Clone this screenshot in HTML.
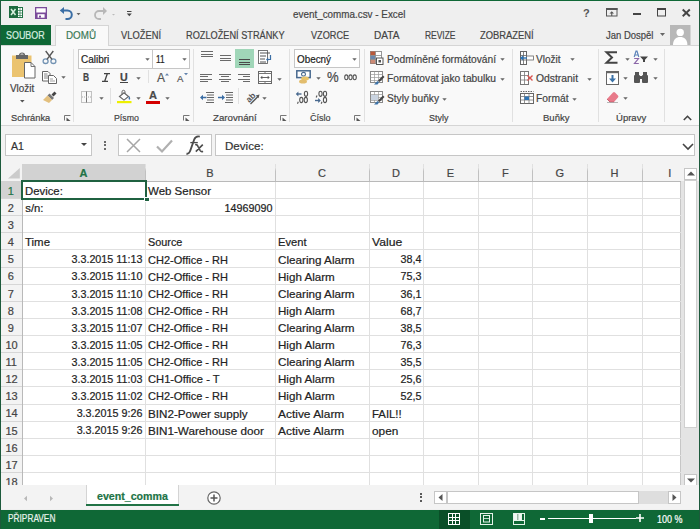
<!DOCTYPE html>
<html><head><meta charset="utf-8"><style>
html,body{margin:0;padding:0;width:700px;height:529px;overflow:hidden;}
body{position:relative;font-family:"Liberation Sans",sans-serif;}
.a{position:absolute;}
.t{position:absolute;white-space:nowrap;line-height:1;transform-origin:0 0;-webkit-text-stroke:0.2px currentColor;}
svg.a{overflow:visible;}
</style></head><body>
<div class="a" style="left:0px;top:0px;width:700px;height:529px;background:#efefef;"></div>
<div class="a" style="left:1px;top:45px;width:698px;height:80px;background:#f9f9f9;"></div>
<div class="a" style="left:1px;top:45px;width:698px;height:1px;background:#d5d5d5;"></div>
<div class="a" style="left:1px;top:125px;width:698px;height:1px;background:#d5d5d5;"></div>
<div class="a" style="left:1px;top:126px;width:698px;height:38px;background:#f3f3f3;"></div>
<svg class="a" style="left:9px;top:6px;" width="15" height="13" viewBox="0 0 15 13"><rect x="8.5" y="1.5" width="5" height="10" fill="#fff" stroke="#217346" stroke-width="1"/><path d="M11 2v9M9 4.5h4M9 7h4M9 9.5h4" stroke="#217346" stroke-width="0.7"/><rect x="0" y="0" width="9" height="12" fill="#1d6b3f"/><path d="M2 3l4.5 6M6.5 3L2 9" stroke="#d9efe0" stroke-width="1.5"/></svg>
<svg class="a" style="left:35px;top:7px;" width="12" height="12" viewBox="0 0 12 12"><rect x="0.65" y="0.65" width="10.7" height="10.7" fill="#fff" stroke="#7a4b9a" stroke-width="1.3"/><rect x="0" y="5.5" width="12" height="1.7" fill="#7a4b9a"/><rect x="0" y="7" width="2.6" height="5" fill="#7a4b9a"/><rect x="9.6" y="7" width="2.4" height="5" fill="#7a4b9a"/><rect x="4" y="8.6" width="2" height="2" fill="#7a4b9a"/></svg>
<svg class="a" style="left:59px;top:5px;" width="24" height="16" viewBox="0 0 24 16"><path d="M3.5 5.5h5a4.3 4.3 0 0 1 0 8.6h-2" fill="none" stroke="#3a6ea5" stroke-width="2"/><path d="M0.8 5.5l4.2-3.6v7.2z" fill="#3a6ea5"/><path d="M17.5 8h4l-2 2.2z" fill="#666"/></svg>
<svg class="a" style="left:93px;top:5px;" width="24" height="16" viewBox="0 0 24 16"><path d="M12 6h-6a4 4 0 0 0 0 8h2" fill="none" stroke="#b8b8b8" stroke-width="1.8"/><path d="M14 6l-4-4v8z" fill="#b8b8b8"/><path d="M19 9h3l-1.5 1.5z" fill="#bbb"/></svg>
<svg class="a" style="left:126px;top:8px;" width="8" height="10" viewBox="0 0 8 10"><rect x="1" y="3" width="4.5" height="1" fill="#444"/><path d="M0.8 5.5h5l-2.5 2.8z" fill="#444"/></svg>
<div class="t" style="left:293.00px;top:8.50px;font-size:10.76px;color:#444;transform:scaleX(0.918)">event_comma.csv - Excel</div>
<svg class="a" style="left:582px;top:7px;" width="10" height="12" viewBox="0 0 10 12"><text x="1" y="10" font-family="Liberation Sans" font-weight="bold" font-size="11" fill="#555">?</text></svg>
<svg class="a" style="left:606px;top:8px;" width="12" height="9" viewBox="0 0 12 9"><rect x="0.5" y="0.5" width="10.5" height="7.5" fill="none" stroke="#555"/><rect x="0" y="0" width="11.5" height="2" fill="#555"/><path d="M5.75 8v-3.5" stroke="#555" stroke-width="1.1"/><path d="M3.5 5.5l2.25-2.2 2.25 2.2z" fill="#555"/></svg>
<div class="a" style="left:632.5px;top:13px;width:8px;height:2px;background:#444;"></div>
<svg class="a" style="left:657px;top:8px;" width="9" height="8.5" viewBox="0 0 9 8.5"><rect x="0.5" y="0.5" width="8" height="7.5" fill="none" stroke="#444"/><rect x="0" y="0" width="9" height="2" fill="#444"/></svg>
<svg class="a" style="left:682px;top:8.8px;" width="8.5" height="7.8" viewBox="0 0 8.5 7.8"><path d="M0.7 0.5l7.1 6.8M7.8 0.5L0.7 7.3" stroke="#444" stroke-width="1.9"/></svg>
<div class="a" style="left:0px;top:25px;width:51px;height:20px;background:#0f6836;"></div>
<div class="t" style="left:6.30px;top:29.67px;font-size:10.90px;color:#d8efe0;transform:scaleX(0.819)">SOUBOR</div>
<div class="a" style="left:55px;top:25px;width:54px;height:21px;background:#f9f9f9;box-sizing:border-box;border:1px solid #d5d5d5;border-bottom:none;"></div>
<div class="t" style="left:65.70px;top:29.67px;font-size:10.90px;color:#3a7a56;transform:scaleX(0.901)">DOMŮ</div>
<div class="t" style="left:121.40px;top:29.67px;font-size:10.90px;color:#444;transform:scaleX(0.858)">VLOŽENÍ</div>
<div class="t" style="left:186.30px;top:29.67px;font-size:10.90px;color:#444;transform:scaleX(0.844)">ROZLOŽENÍ STRÁNKY</div>
<div class="t" style="left:311.30px;top:29.67px;font-size:10.90px;color:#444;transform:scaleX(0.841)">VZORCE</div>
<div class="t" style="left:373.80px;top:29.67px;font-size:10.90px;color:#444;transform:scaleX(0.929)">DATA</div>
<div class="t" style="left:424.50px;top:29.67px;font-size:10.90px;color:#444;transform:scaleX(0.775)">REVIZE</div>
<div class="t" style="left:480.00px;top:29.67px;font-size:10.90px;color:#444;transform:scaleX(0.861)">ZOBRAZENÍ</div>
<div class="t" style="left:606.30px;top:29.67px;font-size:10.90px;color:#444;transform:scaleX(0.871)">Jan Dospěl</div>
<svg class="a" style="left:660px;top:33px;" width="6" height="4" viewBox="0 0 6 4"><path d="M0 0h5l-2.5 3z" fill="#666"/></svg>
<svg class="a" style="left:670px;top:25px;" width="20.5" height="20" viewBox="0 0 20.5 20"><rect width="20.5" height="20" fill="#b8b8b8"/><circle cx="10.2" cy="7.4" r="3.7" fill="#fff"/><path d="M3 20c0-5.5 3.2-8 7.2-8s7.2 2.5 7.2 8z" fill="#fff"/></svg>
<div class="a" style="left:73px;top:49px;width:1px;height:73px;background:#e1e1e1;"></div>
<div class="a" style="left:193px;top:49px;width:1px;height:73px;background:#e1e1e1;"></div>
<div class="a" style="left:289px;top:49px;width:1px;height:73px;background:#e1e1e1;"></div>
<div class="a" style="left:364px;top:49px;width:1px;height:73px;background:#e1e1e1;"></div>
<div class="a" style="left:512px;top:49px;width:1px;height:73px;background:#e1e1e1;"></div>
<div class="a" style="left:598px;top:49px;width:1px;height:73px;background:#e1e1e1;"></div>
<div class="a" style="left:664px;top:49px;width:1px;height:73px;background:#e1e1e1;"></div>
<div class="t" style="left:10.70px;top:113.26px;font-size:9.74px;color:#444;transform:scaleX(0.955)">Schránka</div>
<svg class="a" style="left:64px;top:115px;" width="7" height="6" viewBox="0 0 7 6"><path d="M0.5 5.5V0.5h6" fill="none" stroke="#777" stroke-width="1"/><path d="M2.5 2.5l4 3.5h-4z" fill="#555"/></svg>
<div class="t" style="left:114.00px;top:113.26px;font-size:9.74px;color:#444;transform:scaleX(0.902)">Písmo</div>
<svg class="a" style="left:183px;top:115px;" width="7" height="6" viewBox="0 0 7 6"><path d="M0.5 5.5V0.5h6" fill="none" stroke="#777" stroke-width="1"/><path d="M2.5 2.5l4 3.5h-4z" fill="#555"/></svg>
<div class="t" style="left:212.60px;top:113.26px;font-size:9.74px;color:#444;transform:scaleX(0.997)">Zarovnání</div>
<svg class="a" style="left:280px;top:115px;" width="7" height="6" viewBox="0 0 7 6"><path d="M0.5 5.5V0.5h6" fill="none" stroke="#777" stroke-width="1"/><path d="M2.5 2.5l4 3.5h-4z" fill="#555"/></svg>
<div class="t" style="left:309.60px;top:113.26px;font-size:9.74px;color:#444;transform:scaleX(0.929)">Číslo</div>
<svg class="a" style="left:354px;top:115px;" width="7" height="6" viewBox="0 0 7 6"><path d="M0.5 5.5V0.5h6" fill="none" stroke="#777" stroke-width="1"/><path d="M2.5 2.5l4 3.5h-4z" fill="#555"/></svg>
<div class="t" style="left:428.60px;top:113.26px;font-size:9.74px;color:#444;transform:scaleX(0.919)">Styly</div>
<div class="t" style="left:542.80px;top:113.26px;font-size:9.74px;color:#444;transform:scaleX(0.979)">Buňky</div>
<div class="t" style="left:616.40px;top:113.26px;font-size:9.74px;color:#444;transform:scaleX(0.979)">Úpravy</div>
<svg class="a" style="left:683px;top:115px;" width="9" height="6" viewBox="0 0 9 6"><path d="M0.8 5L4.5 1.3 8.2 5" fill="none" stroke="#444" stroke-width="1.6"/></svg>
<svg class="a" style="left:11px;top:52px;" width="26" height="28" viewBox="0 0 26 28"><rect x="1" y="3.5" width="19.5" height="21.5" fill="#ebc36f"/><rect x="5" y="3" width="12" height="4" fill="#666"/><path d="M8.5 3.2a2.5 2.2 0 0 1 5 0z" fill="none" stroke="#666" stroke-width="1.2"/><path d="M13.5 10.5h6.5l4 4v11.5h-10.5z" fill="#fff" stroke="#666" stroke-width="1"/><path d="M20 10.5v4h4" fill="none" stroke="#666" stroke-width="0.9"/></svg>
<div class="t" style="left:9.80px;top:83.74px;font-size:10.47px;color:#444;transform:scaleX(0.946)">Vložit</div>
<svg class="a" style="left:19.5px;top:100px;" width="5" height="3" viewBox="0 0 5 3"><path d="M0 0h4.6l-2.3 2.6z" fill="#555"/></svg>
<svg class="a" style="left:42px;top:50px;" width="15" height="15" viewBox="0 0 15 15"><ellipse cx="3.6" cy="11.2" rx="2.5" ry="2.3" fill="none" stroke="#7393b3" stroke-width="1.3"/><ellipse cx="11.4" cy="11.2" rx="2.5" ry="2.3" fill="none" stroke="#7393b3" stroke-width="1.3"/><path d="M5 9.3L11.3 1M10 9.3L3.7 1" stroke="#555" stroke-width="1.4"/></svg>
<svg class="a" style="left:42px;top:71px;" width="15" height="13" viewBox="0 0 15 13"><path d="M0.5 0.5h5.5l2 2v7.5h-7.5z" fill="#fff" stroke="#666"/><path d="M2 3h3.5M2 5h4.5M2 7h4.5" stroke="#777" stroke-width="0.9"/><path d="M6.5 4.5h5l3 3v5h-8z" fill="#fff" stroke="#666"/><path d="M8 8h3M8 10h5" stroke="#888" stroke-width="0.8"/></svg>
<svg class="a" style="left:61px;top:76px;" width="5" height="3" viewBox="0 0 5 3"><path d="M0.3 0.2h4.4l-2.2 2.6z" fill="#666"/></svg>
<svg class="a" style="left:43px;top:91px;" width="14" height="12" viewBox="0 0 14 12"><path d="M8.5 3.5l3-3 2 2-3 3z" fill="#444"/><path d="M6.5 2.5l4.5 4.5-2 2-4.5-4.5z" fill="#777"/><path d="M4.5 4.5l4.5 4.5-3 3-6-3z" fill="#e3c07e"/></svg>
<div class="a" style="left:78px;top:49px;width:75px;height:20px;background:#fff;box-sizing:border-box;border:1px solid #c6c6c6;"></div>
<div class="a" style="left:152px;top:49px;width:38px;height:20px;background:#fff;box-sizing:border-box;border:1px solid #c6c6c6;"></div>
<div class="t" style="left:80.60px;top:53.62px;font-size:10.61px;color:#222;transform:scaleX(0.941)">Calibri</div>
<svg class="a" style="left:145px;top:58px;" width="5" height="3" viewBox="0 0 5 3"><path d="M0.3 0.2h4.4l-2.2 2.6z" fill="#666"/></svg>
<div class="t" style="left:156.00px;top:53.62px;font-size:10.61px;color:#222;transform:scaleX(0.781)">11</div>
<svg class="a" style="left:182px;top:58px;" width="5" height="3" viewBox="0 0 5 3"><path d="M0.3 0.2h4.4l-2.2 2.6z" fill="#666"/></svg>
<div class="t" style="left:83.10px;top:71.77px;font-size:10.90px;color:#444;font-weight:bold;transform:scaleX(0.775)">B</div>
<svg class="a" style="left:102px;top:73px;" width="8" height="9" viewBox="0 0 8 9"><path d="M2 0.7h6M0 8.3h6M5.3 0.7L2.7 8.3" fill="none" stroke="#444" stroke-width="1.3"/></svg>
<div class="t" style="left:120.00px;top:71.77px;font-size:10.90px;color:#444;font-weight:bold;transform:scaleX(0.978)">U</div>
<div class="a" style="left:120px;top:82px;width:8px;height:1px;background:#444;"></div>
<svg class="a" style="left:136px;top:77px;" width="5" height="3" viewBox="0 0 5 3"><path d="M0.3 0.2h4.4l-2.2 2.6z" fill="#666"/></svg>
<div class="a" style="left:148px;top:70px;width:1px;height:13px;background:#e1e1e1;"></div>
<div class="t" style="left:157.00px;top:72.26px;font-size:12.21px;color:#555;transform:scaleX(0.982)">A</div>
<svg class="a" style="left:164.5px;top:72.5px;" width="4" height="3" viewBox="0 0 4 3"><path d="M0 2.5l2-2.3 2 2.3z" fill="#6283ad"/></svg>
<div class="t" style="left:176.60px;top:74.23px;font-size:9.88px;color:#555;transform:scaleX(0.971)">A</div>
<svg class="a" style="left:184px;top:72.5px;" width="4" height="3" viewBox="0 0 4 3"><path d="M0 0h4l-2 2.3z" fill="#6283ad"/></svg>
<svg class="a" style="left:81px;top:91px;" width="11" height="12" viewBox="0 0 11 12"><rect x="0.5" y="0.5" width="10" height="11" fill="none" stroke="#8a8a8a" stroke-dasharray="1 1"/><path d="M5.5 0.5v11" stroke="#777"/><path d="M1 6h9" stroke="#aaa" stroke-dasharray="1 1"/></svg>
<svg class="a" style="left:99px;top:97px;" width="5" height="3" viewBox="0 0 5 3"><path d="M0.3 0.2h4.4l-2.2 2.6z" fill="#666"/></svg>
<div class="a" style="left:110px;top:88px;width:1px;height:16px;background:#e1e1e1;"></div>
<svg class="a" style="left:116.5px;top:90px;" width="15" height="14" viewBox="0 0 15 14"><path d="M2.5 6.5l4.5-3.8 4.5 3.8-4.5 3.6z" fill="#fff" stroke="#666" stroke-width="1.2"/><path d="M5 4.5V1.8a1.5 1.5 0 0 1 3 0v2" fill="none" stroke="#666" stroke-width="1"/><path d="M12 6c1.2 1.6 1.6 2.8 0.8 3.6-0.8 0.6-1.8-0.4-0.8-3.6z" fill="#3b6ea5"/><rect x="0" y="11" width="14.5" height="2.2" fill="#eef000"/></svg>
<svg class="a" style="left:136px;top:97px;" width="5" height="3" viewBox="0 0 5 3"><path d="M0.3 0.2h4.4l-2.2 2.6z" fill="#666"/></svg>
<div class="t" style="left:149.20px;top:90.45px;font-size:11.05px;color:#4a4a4a;font-weight:bold;transform:scaleX(1.003)">A</div>
<div class="a" style="left:146px;top:101px;width:13.5px;height:3px;background:#d40000;"></div>
<svg class="a" style="left:165px;top:97px;" width="5" height="3" viewBox="0 0 5 3"><path d="M0.3 0.2h4.4l-2.2 2.6z" fill="#666"/></svg>
<div class="a" style="left:235px;top:48.5px;width:18.5px;height:19.5px;background:#a0d6b8;"></div>
<div class="a" style="left:201px;top:51px;width:11.5px;height:1px;background:#6a6a6a;"></div>
<div class="a" style="left:201px;top:53.5px;width:11.5px;height:1px;background:#6a6a6a;"></div>
<div class="a" style="left:201px;top:56px;width:11.5px;height:1px;background:#6a6a6a;"></div>
<div class="a" style="left:219.5px;top:55px;width:11.5px;height:1px;background:#6a6a6a;"></div>
<div class="a" style="left:219.5px;top:57.5px;width:11.5px;height:1px;background:#6a6a6a;"></div>
<div class="a" style="left:219.5px;top:60px;width:11.5px;height:1px;background:#6a6a6a;"></div>
<div class="a" style="left:238.5px;top:59px;width:11.5px;height:1px;background:#4a4a4a;"></div>
<div class="a" style="left:238.5px;top:61.5px;width:11.5px;height:1px;background:#4a4a4a;"></div>
<div class="a" style="left:238.5px;top:64px;width:11.5px;height:1px;background:#4a4a4a;"></div>
<svg class="a" style="left:258px;top:50px;" width="15" height="14" viewBox="0 0 15 14"><rect x="0.5" y="0.5" width="9" height="13" fill="#fff" stroke="#666" stroke-width="0.9"/><path d="M2 3h10M2 6h6M2 9h5M2 12h6" stroke="#555" stroke-width="1"/><path d="M12.5 5v4.5h-3.5" fill="none" stroke="#3b6ea5" stroke-width="1.2"/><path d="M8 9.5l2.2-2v4z" fill="#3b6ea5"/></svg>
<div class="a" style="left:200px;top:73.5px;width:12px;height:1px;background:#6a6a6a;"></div>
<div class="a" style="left:219.0px;top:73.5px;width:12px;height:1px;background:#6a6a6a;"></div>
<div class="a" style="left:238px;top:73.5px;width:12px;height:1px;background:#6a6a6a;"></div>
<div class="a" style="left:200px;top:76px;width:7.5px;height:1px;background:#6a6a6a;"></div>
<div class="a" style="left:221.25px;top:76px;width:7.5px;height:1px;background:#6a6a6a;"></div>
<div class="a" style="left:242.5px;top:76px;width:7.5px;height:1px;background:#6a6a6a;"></div>
<div class="a" style="left:200px;top:78.5px;width:12px;height:1px;background:#6a6a6a;"></div>
<div class="a" style="left:219.0px;top:78.5px;width:12px;height:1px;background:#6a6a6a;"></div>
<div class="a" style="left:238px;top:78.5px;width:12px;height:1px;background:#6a6a6a;"></div>
<div class="a" style="left:200px;top:81px;width:7.5px;height:1px;background:#6a6a6a;"></div>
<div class="a" style="left:221.25px;top:81px;width:7.5px;height:1px;background:#6a6a6a;"></div>
<div class="a" style="left:242.5px;top:81px;width:7.5px;height:1px;background:#6a6a6a;"></div>
<svg class="a" style="left:258px;top:71px;" width="14" height="13" viewBox="0 0 14 13"><rect x="0.5" y="0.5" width="13" height="12" fill="#fff" stroke="#666"/><path d="M0.5 2.5h13M0.5 10.5h13" stroke="#777"/><path d="M7 0.5v2M7 10.5v2" stroke="#777"/><path d="M3 6.5h8" stroke="#555" stroke-width="0.9"/><path d="M2.3 6.5l2-1.7v3.4zM11.7 6.5l-2-1.7v3.4z" fill="#555"/></svg>
<svg class="a" style="left:277px;top:78px;" width="5" height="3" viewBox="0 0 5 3"><path d="M0.3 0.2h4.4l-2.2 2.6z" fill="#666"/></svg>
<svg class="a" style="left:200px;top:92px;" width="14" height="11" viewBox="0 0 14 11"><path d="M6 0.5h8M7 3h7M7 5.5h7M7 8h7M6 10.5h8" stroke="#666" stroke-width="1"/><path d="M1.5 5.5h5" stroke="#3b6ea5" stroke-width="1.5"/><path d="M0 5.5l3-2.8v5.6z" fill="#3b6ea5"/></svg>
<svg class="a" style="left:218px;top:92px;" width="15" height="11" viewBox="0 0 15 11"><path d="M7 0.5h8M8 3h7M8 5.5h7M8 8h7M7 10.5h8" stroke="#666" stroke-width="1"/><path d="M0 5.5h5" stroke="#3b6ea5" stroke-width="1.5"/><path d="M7 5.5l-3-2.8v5.6z" fill="#3b6ea5"/></svg>
<div class="a" style="left:238px;top:88px;width:1px;height:16px;background:#e1e1e1;"></div>
<svg class="a" style="left:245px;top:90px;" width="16" height="15" viewBox="0 0 16 15"><g transform="rotate(-45 6 7)"><text x="0.5" y="10" font-family="Liberation Sans" font-size="8.5" font-weight="bold" fill="#555">ab</text></g><path d="M5.5 14l7.5-7.5" stroke="#555" stroke-width="1.3"/><path d="M14.5 4.5l-1 3.8-2.8-2.8z" fill="#555"/></svg>
<svg class="a" style="left:262px;top:97px;" width="5" height="3" viewBox="0 0 5 3"><path d="M0.3 0.2h4.4l-2.2 2.6z" fill="#666"/></svg>
<div class="a" style="left:294px;top:49px;width:66px;height:19px;background:#fff;box-sizing:border-box;border:1px solid #c6c6c6;"></div>
<div class="t" style="left:297.00px;top:53.60px;font-size:10.76px;color:#222;transform:scaleX(0.917)">Obecný</div>
<svg class="a" style="left:352px;top:58px;" width="5" height="3" viewBox="0 0 5 3"><path d="M0.3 0.2h4.4l-2.2 2.6z" fill="#666"/></svg>
<svg class="a" style="left:296px;top:70px;" width="16" height="14" viewBox="0 0 16 14"><rect x="0.8" y="0.8" width="13.4" height="6.8" fill="#fff" stroke="#48698f" stroke-width="1.5"/><ellipse cx="7.5" cy="4.2" rx="2" ry="1.8" fill="none" stroke="#48698f" stroke-width="1.1"/><ellipse cx="9" cy="8.5" rx="4" ry="2" fill="#e9c46a"/><ellipse cx="7" cy="11.5" rx="4" ry="2" fill="#e2bd6e"/></svg>
<svg class="a" style="left:316px;top:77px;" width="5" height="3" viewBox="0 0 5 3"><path d="M0.3 0.2h4.4l-2.2 2.6z" fill="#666"/></svg>
<div class="t" style="left:327.00px;top:71.31px;font-size:13.81px;color:#4a4a4a;transform:scaleX(0.950)">%</div>
<svg class="a" style="left:344px;top:74px;" width="14" height="7" viewBox="0 0 14 7"><ellipse cx="2.3" cy="3.3" rx="1.6" ry="2.4" fill="none" stroke="#555" stroke-width="1.1"/><ellipse cx="6.5" cy="3.3" rx="1.6" ry="2.4" fill="none" stroke="#555" stroke-width="1.1"/><ellipse cx="10.7" cy="3.3" rx="1.6" ry="2.4" fill="none" stroke="#555" stroke-width="1.1"/></svg>
<svg class="a" style="left:295px;top:90px;" width="15" height="15" viewBox="0 0 15 15"><path d="M2 4h4.5" stroke="#48698f" stroke-width="1.4"/><path d="M0.8 4l2.6-2.4v4.8z" fill="#48698f"/><ellipse cx="11" cy="3.8" rx="1.6" ry="2.6" fill="none" stroke="#555" stroke-width="1.1"/><path d="M3.3 11.8l-0.8 2" stroke="#555" stroke-width="1.1"/><ellipse cx="6.3" cy="10" rx="1.6" ry="2.6" fill="none" stroke="#555" stroke-width="1.1"/><ellipse cx="10.8" cy="10" rx="1.6" ry="2.6" fill="none" stroke="#555" stroke-width="1.1"/></svg>
<svg class="a" style="left:314px;top:90px;" width="15" height="15" viewBox="0 0 15 15"><path d="M3 5.5l-0.8 2" stroke="#555" stroke-width="1.1"/><ellipse cx="6.5" cy="3.8" rx="1.6" ry="2.6" fill="none" stroke="#555" stroke-width="1.1"/><ellipse cx="11" cy="3.8" rx="1.6" ry="2.6" fill="none" stroke="#555" stroke-width="1.1"/><path d="M1 10.5h4.5" stroke="#48698f" stroke-width="1.4"/><path d="M6.8 10.5l-2.6-2.4v4.8z" fill="#48698f"/><path d="M8 11.8l-0.8 2" stroke="#555" stroke-width="1.1"/><ellipse cx="11" cy="10" rx="1.6" ry="2.6" fill="none" stroke="#555" stroke-width="1.1"/></svg>
<svg class="a" style="left:370px;top:51px;" width="14" height="14" viewBox="0 0 14 14"><rect x="0.5" y="0.5" width="11" height="12" fill="#fff" stroke="#8a8a8a" stroke-width="0.9"/><rect x="0.5" y="0.5" width="5" height="4" fill="#b8583a"/><rect x="0.5" y="4.5" width="5" height="4" fill="#6a86ab"/><rect x="0.5" y="8.5" width="5" height="4" fill="#b8583a" opacity="0.7"/><path d="M5.5 0.5v12M0.5 4.5h11M0.5 8.5h11" stroke="#8a8a8a" stroke-width="0.8"/><rect x="6.5" y="7" width="6.5" height="6.5" fill="#fff" stroke="#555" stroke-width="1"/><rect x="8.5" y="9" width="2.5" height="2.5" fill="#555"/></svg>
<div class="t" style="left:387.00px;top:53.72px;font-size:10.61px;color:#444;transform:scaleX(0.963)">Podmíněné formátování</div>
<svg class="a" style="left:499.5px;top:58px;" width="5" height="3" viewBox="0 0 5 3"><path d="M0.3 0.2h4.4l-2.2 2.6z" fill="#666"/></svg>
<svg class="a" style="left:370px;top:71px;" width="15" height="14" viewBox="0 0 15 14"><rect x="0.5" y="0.5" width="12" height="11" fill="#fff" stroke="#888"/><path d="M4.5 0.5v11M8.5 0.5v11M0.5 3.5h12M0.5 6.5h12M0.5 9.5h12" stroke="#999" stroke-width="0.7"/><path d="M8 9.5l5-5 1.5 1.5-5 5z" fill="#444"/><path d="M4 13.5l3.5-3.5 1.5 1.5-1.5 2z" fill="#3c73a8"/></svg>
<div class="t" style="left:387.00px;top:73.42px;font-size:10.61px;color:#444;transform:scaleX(0.963)">Formátovat jako tabulku</div>
<svg class="a" style="left:499.5px;top:78px;" width="5" height="3" viewBox="0 0 5 3"><path d="M0.3 0.2h4.4l-2.2 2.6z" fill="#666"/></svg>
<svg class="a" style="left:370px;top:91px;" width="15" height="14" viewBox="0 0 15 14"><rect x="0.5" y="0.5" width="12" height="11" fill="#fff" stroke="#888"/><path d="M4.5 0.5v11M8.5 0.5v11M0.5 3.5h12M0.5 6.5h12M0.5 9.5h12" stroke="#999" stroke-width="0.7"/><rect x="1" y="4" width="7" height="5" fill="#c9d3e0"/><path d="M8 9.5l5-5 1.5 1.5-5 5z" fill="#444"/><path d="M4 13.5l3.5-3.5 1.5 1.5-1.5 2z" fill="#3c73a8"/></svg>
<div class="t" style="left:387.00px;top:93.32px;font-size:10.61px;color:#444;transform:scaleX(0.959)">Styly buňky</div>
<svg class="a" style="left:441.5px;top:98px;" width="5" height="3" viewBox="0 0 5 3"><path d="M0.3 0.2h4.4l-2.2 2.6z" fill="#666"/></svg>
<svg class="a" style="left:520px;top:51px;" width="14" height="14" viewBox="0 0 14 14"><rect x="0.5" y="0.5" width="6" height="13" fill="#fff" stroke="#666"/><path d="M0.5 4.5h6M0.5 9h6M3.5 0.5v13" stroke="#666" stroke-width="0.8"/><rect x="6.5" y="5" width="7" height="4" fill="#fff" stroke="#666" stroke-width="0.8"/><path d="M1 7h6" stroke="#2e74b5" stroke-width="1.4"/><path d="M0 7l3-2.5v5z" fill="#2e74b5"/></svg>
<div class="t" style="left:536.00px;top:53.72px;font-size:10.61px;color:#444;transform:scaleX(0.948)">Vložit</div>
<svg class="a" style="left:570px;top:58px;" width="5" height="3" viewBox="0 0 5 3"><path d="M0.3 0.2h4.4l-2.2 2.6z" fill="#666"/></svg>
<svg class="a" style="left:520px;top:71px;" width="14" height="14" viewBox="0 0 14 14"><rect x="0.5" y="0.5" width="8" height="13" fill="#fff" stroke="#777"/><path d="M0.5 4.5h8M0.5 9h8M4.5 0.5v13" stroke="#777" stroke-width="0.8"/><path d="M7.5 4.5l5 5M12.5 4.5l-5 5" stroke="#d9534f" stroke-width="1.4"/></svg>
<div class="t" style="left:536.00px;top:73.42px;font-size:10.61px;color:#444;transform:scaleX(0.976)">Odstranit</div>
<svg class="a" style="left:587px;top:78px;" width="5" height="3" viewBox="0 0 5 3"><path d="M0.3 0.2h4.4l-2.2 2.6z" fill="#666"/></svg>
<svg class="a" style="left:520px;top:91px;" width="14" height="14" viewBox="0 0 14 14"><path d="M0.5 0.5h13" stroke="#666" stroke-dasharray="1.5 1"/><rect x="0.5" y="2.5" width="13" height="10" fill="#fff" stroke="#666"/><path d="M0.5 5.5h13M0.5 9h13M4.5 2.5v10M9 2.5v10" stroke="#777" stroke-width="0.8"/><rect x="4.5" y="5.5" width="4.5" height="3.5" fill="#2e74b5"/></svg>
<div class="t" style="left:536.00px;top:93.32px;font-size:10.61px;color:#444;transform:scaleX(0.967)">Formát</div>
<svg class="a" style="left:572px;top:98px;" width="5" height="3" viewBox="0 0 5 3"><path d="M0.3 0.2h4.4l-2.2 2.6z" fill="#666"/></svg>
<svg class="a" style="left:605px;top:51px;" width="13" height="13" viewBox="0 0 13 13"><path d="M12 1.2H1.5L7 6.5 1.5 11.8H12.5" fill="none" stroke="#444" stroke-width="2"/></svg>
<svg class="a" style="left:624.5px;top:58px;" width="5" height="3" viewBox="0 0 5 3"><path d="M0.3 0.2h4.4l-2.2 2.6z" fill="#666"/></svg>
<svg class="a" style="left:633px;top:50px;" width="16" height="15" viewBox="0 0 16 15"><path d="M1.2 7L3 1h1l1.8 6M2 5h3" fill="none" stroke="#5f86bb" stroke-width="1.2"/><path d="M1.2 8.5h4.3L1.5 13.5h4.3" fill="none" stroke="#8a66a8" stroke-width="1.2"/><path d="M7 6.5h8l-3 3.2V12h-2V9.7z" fill="#444"/></svg>
<svg class="a" style="left:653px;top:58px;" width="5" height="3" viewBox="0 0 5 3"><path d="M0.3 0.2h4.4l-2.2 2.6z" fill="#666"/></svg>
<svg class="a" style="left:606px;top:70.5px;" width="13" height="14" viewBox="0 0 13 14"><rect x="0.5" y="0.5" width="12" height="13" fill="#fff" stroke="#666"/><rect x="0" y="0" width="13" height="2.2" fill="#666"/><path d="M6.5 4v6" stroke="#3c73a8" stroke-width="2"/><path d="M3 7.5h7L6.5 11.5z" fill="#3c73a8"/></svg>
<svg class="a" style="left:623px;top:77px;" width="5" height="3" viewBox="0 0 5 3"><path d="M0.3 0.2h4.4l-2.2 2.6z" fill="#666"/></svg>
<svg class="a" style="left:634px;top:72px;" width="14" height="11" viewBox="0 0 14 11"><rect x="0" y="3" width="6" height="8" rx="1" fill="#555"/><rect x="8" y="3" width="6" height="8" rx="1" fill="#555"/><rect x="1" y="0" width="4" height="4" fill="#555"/><rect x="9" y="0" width="4" height="4" fill="#555"/><rect x="5" y="4" width="4" height="3" fill="#555"/></svg>
<svg class="a" style="left:653px;top:77px;" width="5" height="3" viewBox="0 0 5 3"><path d="M0.3 0.2h4.4l-2.2 2.6z" fill="#666"/></svg>
<svg class="a" style="left:606px;top:91px;" width="13" height="12" viewBox="0 0 13 12"><path d="M1 8l6-6.5a1.5 1.5 0 0 1 2 0l3 3a1.5 1.5 0 0 1 0 2L8 11H4z" fill="#e87a8a"/><path d="M1 8l3 3h4" fill="none" stroke="#c9596a" stroke-width="0.9"/><path d="M1 11.5h11" stroke="#999" stroke-width="0.7"/></svg>
<svg class="a" style="left:623px;top:97px;" width="5" height="3" viewBox="0 0 5 3"><path d="M0.3 0.2h4.4l-2.2 2.6z" fill="#666"/></svg>
<div class="a" style="left:5px;top:134px;width:87px;height:22px;background:#fff;box-sizing:border-box;border:1px solid #c6c6c6;"></div>
<div class="t" style="left:11.40px;top:140.65px;font-size:11.05px;color:#333;transform:scaleX(0.955)">A1</div>
<svg class="a" style="left:81px;top:143px;" width="6" height="4" viewBox="0 0 6 4"><path d="M0 0h6l-3 3z" fill="#444"/></svg>
<div class="a" style="left:104px;top:140.9px;width:2px;height:2px;background:#6a6a6a;"></div>
<div class="a" style="left:104px;top:144.3px;width:2px;height:2px;background:#6a6a6a;"></div>
<div class="a" style="left:104px;top:147.7px;width:2px;height:2px;background:#6a6a6a;"></div>
<div class="a" style="left:118px;top:134px;width:94px;height:22px;background:#fff;box-sizing:border-box;border:1px solid #c6c6c6;"></div>
<svg class="a" style="left:126px;top:138px;" width="15" height="15" viewBox="0 0 15 15"><path d="M1 1l13 13M14 1L1 14" stroke="#a6a6a6" stroke-width="1.5"/></svg>
<svg class="a" style="left:156px;top:139px;" width="17" height="14" viewBox="0 0 17 14"><path d="M1 7.5l5 5L16 1.5" fill="none" stroke="#b0b0b0" stroke-width="2.2"/></svg>
<svg class="a" style="left:180px;top:134px;" width="30" height="24" viewBox="0 0 30 24"><path d="M6.5 19.5Q9 20.5 10.5 16L14.2 5.5Q15.8 1.6 19.8 2.6" fill="none" stroke="#4d4d4d" stroke-width="1.9"/><path d="M10.3 8.6H17.8" stroke="#4d4d4d" stroke-width="1.3"/><path d="M15.2 10.8Q17 10.2 18 12.3L20.2 16.6Q21.3 18.3 23 17.3M22.8 10.6L15.8 17.6" fill="none" stroke="#4d4d4d" stroke-width="1.6"/></svg>
<div class="a" style="left:215px;top:134px;width:480px;height:22px;background:#fff;box-sizing:border-box;border:1px solid #c6c6c6;"></div>
<div class="t" style="left:225.00px;top:140.65px;font-size:11.05px;color:#333;transform:scaleX(1.048)">Device:</div>
<svg class="a" style="left:682px;top:143px;" width="12" height="8" viewBox="0 0 12 8"><path d="M1 1l5 5 5-5" fill="none" stroke="#444" stroke-width="1.6"/></svg>
<div class="a" style="left:1px;top:164px;width:680px;height:17px;background:#f3f3f3;"></div>
<div class="a" style="left:1px;top:181px;width:21px;height:304px;background:#f3f3f3;"></div>
<div class="a" style="left:22px;top:164px;width:123px;height:17px;background:#d2d2d2;"></div>
<div class="a" style="left:22px;top:179.5px;width:123px;height:2px;background:#217346;"></div>
<div class="a" style="left:1px;top:181px;width:21px;height:17px;background:#d2d2d2;"></div>
<div class="a" style="left:20.5px;top:181px;width:1.5px;height:17px;background:#217346;"></div>
<div class="a" style="left:22px;top:181px;width:658.5px;height:304px;background:#fff;"></div>
<div class="a" style="left:145px;top:164px;width:1px;height:321px;background:#e0e0e0;"></div>
<div class="a" style="left:275px;top:164px;width:1px;height:321px;background:#e0e0e0;"></div>
<div class="a" style="left:369px;top:164px;width:1px;height:321px;background:#e0e0e0;"></div>
<div class="a" style="left:423px;top:164px;width:1px;height:321px;background:#e0e0e0;"></div>
<div class="a" style="left:478px;top:164px;width:1px;height:321px;background:#e0e0e0;"></div>
<div class="a" style="left:532px;top:164px;width:1px;height:321px;background:#e0e0e0;"></div>
<div class="a" style="left:587px;top:164px;width:1px;height:321px;background:#e0e0e0;"></div>
<div class="a" style="left:642px;top:164px;width:1px;height:321px;background:#e0e0e0;"></div>
<div class="a" style="left:680px;top:181px;width:1px;height:304px;background:#c6c6c6;"></div>
<div class="a" style="left:22px;top:198px;width:658.5px;height:1px;background:#e0e0e0;"></div>
<div class="a" style="left:22px;top:215px;width:658.5px;height:1px;background:#e0e0e0;"></div>
<div class="a" style="left:22px;top:232px;width:658.5px;height:1px;background:#e0e0e0;"></div>
<div class="a" style="left:22px;top:249px;width:658.5px;height:1px;background:#e0e0e0;"></div>
<div class="a" style="left:22px;top:267px;width:658.5px;height:1px;background:#e0e0e0;"></div>
<div class="a" style="left:22px;top:284px;width:658.5px;height:1px;background:#e0e0e0;"></div>
<div class="a" style="left:22px;top:301px;width:658.5px;height:1px;background:#e0e0e0;"></div>
<div class="a" style="left:22px;top:318px;width:658.5px;height:1px;background:#e0e0e0;"></div>
<div class="a" style="left:22px;top:335px;width:658.5px;height:1px;background:#e0e0e0;"></div>
<div class="a" style="left:22px;top:352px;width:658.5px;height:1px;background:#e0e0e0;"></div>
<div class="a" style="left:22px;top:369px;width:658.5px;height:1px;background:#e0e0e0;"></div>
<div class="a" style="left:22px;top:386px;width:658.5px;height:1px;background:#e0e0e0;"></div>
<div class="a" style="left:22px;top:404px;width:658.5px;height:1px;background:#e0e0e0;"></div>
<div class="a" style="left:22px;top:421px;width:658.5px;height:1px;background:#e0e0e0;"></div>
<div class="a" style="left:22px;top:438px;width:658.5px;height:1px;background:#e0e0e0;"></div>
<div class="a" style="left:22px;top:455px;width:658.5px;height:1px;background:#e0e0e0;"></div>
<div class="a" style="left:22px;top:472px;width:658.5px;height:1px;background:#e0e0e0;"></div>
<div class="a" style="left:145px;top:167px;width:1px;height:14px;background:#c4c4c4;background:linear-gradient(#e8e8e8,#c0c0c0 30%);"></div>
<div class="a" style="left:275px;top:167px;width:1px;height:14px;background:#c4c4c4;background:linear-gradient(#e8e8e8,#c0c0c0 30%);"></div>
<div class="a" style="left:369px;top:167px;width:1px;height:14px;background:#c4c4c4;background:linear-gradient(#e8e8e8,#c0c0c0 30%);"></div>
<div class="a" style="left:423px;top:167px;width:1px;height:14px;background:#c4c4c4;background:linear-gradient(#e8e8e8,#c0c0c0 30%);"></div>
<div class="a" style="left:478px;top:167px;width:1px;height:14px;background:#c4c4c4;background:linear-gradient(#e8e8e8,#c0c0c0 30%);"></div>
<div class="a" style="left:532px;top:167px;width:1px;height:14px;background:#c4c4c4;background:linear-gradient(#e8e8e8,#c0c0c0 30%);"></div>
<div class="a" style="left:587px;top:167px;width:1px;height:14px;background:#c4c4c4;background:linear-gradient(#e8e8e8,#c0c0c0 30%);"></div>
<div class="a" style="left:642px;top:167px;width:1px;height:14px;background:#c4c4c4;background:linear-gradient(#e8e8e8,#c0c0c0 30%);"></div>
<div class="a" style="left:145px;top:181px;width:536px;height:1px;background:#b9b9b9;"></div>
<div class="a" style="left:22px;top:181px;width:1px;height:304px;background:#b9b9b9;"></div>
<div class="a" style="left:1px;top:198px;width:21px;height:1px;background:#d6d6d6;"></div>
<div class="a" style="left:1px;top:215px;width:21px;height:1px;background:#d6d6d6;"></div>
<div class="a" style="left:1px;top:232px;width:21px;height:1px;background:#d6d6d6;"></div>
<div class="a" style="left:1px;top:249px;width:21px;height:1px;background:#d6d6d6;"></div>
<div class="a" style="left:1px;top:267px;width:21px;height:1px;background:#d6d6d6;"></div>
<div class="a" style="left:1px;top:284px;width:21px;height:1px;background:#d6d6d6;"></div>
<div class="a" style="left:1px;top:301px;width:21px;height:1px;background:#d6d6d6;"></div>
<div class="a" style="left:1px;top:318px;width:21px;height:1px;background:#d6d6d6;"></div>
<div class="a" style="left:1px;top:335px;width:21px;height:1px;background:#d6d6d6;"></div>
<div class="a" style="left:1px;top:352px;width:21px;height:1px;background:#d6d6d6;"></div>
<div class="a" style="left:1px;top:369px;width:21px;height:1px;background:#d6d6d6;"></div>
<div class="a" style="left:1px;top:386px;width:21px;height:1px;background:#d6d6d6;"></div>
<div class="a" style="left:1px;top:404px;width:21px;height:1px;background:#d6d6d6;"></div>
<div class="a" style="left:1px;top:421px;width:21px;height:1px;background:#d6d6d6;"></div>
<div class="a" style="left:1px;top:438px;width:21px;height:1px;background:#d6d6d6;"></div>
<div class="a" style="left:1px;top:455px;width:21px;height:1px;background:#d6d6d6;"></div>
<div class="a" style="left:1px;top:472px;width:21px;height:1px;background:#d6d6d6;"></div>
<svg class="a" style="left:7.5px;top:167.5px;" width="12" height="11" viewBox="0 0 12 11"><path d="M11.8 0v10.5H0z" fill="#cbcbcb"/></svg>
<div class="t" style="left:79.53px;top:167.89px;font-size:11.00px;color:#217346;font-weight:bold;transform:scaleX(1.000)">A</div>
<div class="t" style="left:206.33px;top:167.89px;font-size:11.00px;color:#444;transform:scaleX(1.000)">B</div>
<div class="t" style="left:318.03px;top:167.89px;font-size:11.00px;color:#444;transform:scaleX(1.000)">C</div>
<div class="t" style="left:392.03px;top:167.89px;font-size:11.00px;color:#444;transform:scaleX(1.000)">D</div>
<div class="t" style="left:446.83px;top:167.89px;font-size:11.00px;color:#444;transform:scaleX(1.000)">E</div>
<div class="t" style="left:501.89px;top:167.89px;font-size:11.00px;color:#444;transform:scaleX(1.000)">F</div>
<div class="t" style="left:555.47px;top:167.89px;font-size:11.00px;color:#444;transform:scaleX(1.000)">G</div>
<div class="t" style="left:610.53px;top:167.89px;font-size:11.00px;color:#444;transform:scaleX(1.000)">H</div>
<div class="t" style="left:668.27px;top:167.89px;font-size:11.00px;color:#444;transform:scaleX(1.000)">I</div>
<div class="t" style="left:7.74px;top:185.89px;font-size:11.00px;color:#217346;transform:scaleX(1.000)">1</div>
<div class="t" style="left:7.74px;top:203.01px;font-size:11.00px;color:#444;transform:scaleX(1.000)">2</div>
<div class="t" style="left:7.74px;top:220.13px;font-size:11.00px;color:#444;transform:scaleX(1.000)">3</div>
<div class="t" style="left:7.74px;top:237.25px;font-size:11.00px;color:#444;transform:scaleX(1.000)">4</div>
<div class="t" style="left:7.74px;top:254.37px;font-size:11.00px;color:#444;transform:scaleX(1.000)">5</div>
<div class="t" style="left:7.74px;top:271.49px;font-size:11.00px;color:#444;transform:scaleX(1.000)">6</div>
<div class="t" style="left:7.74px;top:288.61px;font-size:11.00px;color:#444;transform:scaleX(1.000)">7</div>
<div class="t" style="left:7.74px;top:305.73px;font-size:11.00px;color:#444;transform:scaleX(1.000)">8</div>
<div class="t" style="left:7.74px;top:322.85px;font-size:11.00px;color:#444;transform:scaleX(1.000)">9</div>
<div class="t" style="left:5.50px;top:339.97px;font-size:11.00px;color:#444;transform:scaleX(1.000)">10</div>
<div class="t" style="left:5.50px;top:357.09px;font-size:11.00px;color:#444;transform:scaleX(1.000)">11</div>
<div class="t" style="left:5.50px;top:374.21px;font-size:11.00px;color:#444;transform:scaleX(1.000)">12</div>
<div class="t" style="left:5.50px;top:391.33px;font-size:11.00px;color:#444;transform:scaleX(1.000)">13</div>
<div class="t" style="left:5.50px;top:408.45px;font-size:11.00px;color:#444;transform:scaleX(1.000)">14</div>
<div class="t" style="left:5.50px;top:425.57px;font-size:11.00px;color:#444;transform:scaleX(1.000)">15</div>
<div class="t" style="left:5.50px;top:442.69px;font-size:11.00px;color:#444;transform:scaleX(1.000)">16</div>
<div class="t" style="left:5.50px;top:459.81px;font-size:11.00px;color:#444;transform:scaleX(1.000)">17</div>
<div class="t" style="left:5.50px;top:476.93px;font-size:11.00px;color:#444;transform:scaleX(1.000)">18</div>
<div class="t" style="left:25.30px;top:186.03px;font-size:11.30px;color:#222;transform:scaleX(1.003)">Device:</div>
<div class="t" style="left:148.20px;top:186.03px;font-size:11.30px;color:#222;transform:scaleX(1.017)">Web Sensor</div>
<div class="t" style="left:25.30px;top:203.15px;font-size:11.30px;color:#222;transform:scaleX(1.000)">s/n:</div>
<div class="t" style="left:224.57px;top:202.92px;font-size:10.75px;color:#222;transform:scaleX(1.000)">14969090</div>
<div class="t" style="left:25.30px;top:237.39px;font-size:11.30px;color:#222;transform:scaleX(1.013)">Time</div>
<div class="t" style="left:148.20px;top:237.39px;font-size:11.30px;color:#222;transform:scaleX(0.961)">Source</div>
<div class="t" style="left:278.00px;top:237.39px;font-size:11.30px;color:#222;transform:scaleX(0.990)">Event</div>
<div class="t" style="left:371.70px;top:237.39px;font-size:11.30px;color:#222;transform:scaleX(1.080)">Value</div>
<div class="t" style="left:71.46px;top:254.28px;font-size:10.75px;color:#222;transform:scaleX(1.000)">3.3.2015 11:13</div>
<div class="t" style="left:148.20px;top:254.51px;font-size:11.30px;color:#222;transform:scaleX(0.975)">CH2-Office - RH</div>
<div class="t" style="left:278.00px;top:254.51px;font-size:11.30px;color:#222;transform:scaleX(1.034)">Clearing Alarm</div>
<div class="t" style="left:400.48px;top:254.28px;font-size:10.75px;color:#222;transform:scaleX(1.000)">38,4</div>
<div class="t" style="left:71.46px;top:271.40px;font-size:10.75px;color:#222;transform:scaleX(1.000)">3.3.2015 11:10</div>
<div class="t" style="left:148.20px;top:271.63px;font-size:11.30px;color:#222;transform:scaleX(0.975)">CH2-Office - RH</div>
<div class="t" style="left:278.00px;top:271.63px;font-size:11.30px;color:#222;transform:scaleX(1.026)">High Alarm</div>
<div class="t" style="left:400.48px;top:271.40px;font-size:10.75px;color:#222;transform:scaleX(1.000)">75,3</div>
<div class="t" style="left:71.46px;top:288.52px;font-size:10.75px;color:#222;transform:scaleX(1.000)">3.3.2015 11:10</div>
<div class="t" style="left:148.20px;top:288.75px;font-size:11.30px;color:#222;transform:scaleX(0.975)">CH2-Office - RH</div>
<div class="t" style="left:278.00px;top:288.75px;font-size:11.30px;color:#222;transform:scaleX(1.034)">Clearing Alarm</div>
<div class="t" style="left:400.48px;top:288.52px;font-size:10.75px;color:#222;transform:scaleX(1.000)">36,1</div>
<div class="t" style="left:71.46px;top:305.64px;font-size:10.75px;color:#222;transform:scaleX(1.000)">3.3.2015 11:08</div>
<div class="t" style="left:148.20px;top:305.87px;font-size:11.30px;color:#222;transform:scaleX(0.975)">CH2-Office - RH</div>
<div class="t" style="left:278.00px;top:305.87px;font-size:11.30px;color:#222;transform:scaleX(1.026)">High Alarm</div>
<div class="t" style="left:400.48px;top:305.64px;font-size:10.75px;color:#222;transform:scaleX(1.000)">68,7</div>
<div class="t" style="left:71.46px;top:322.76px;font-size:10.75px;color:#222;transform:scaleX(1.000)">3.3.2015 11:07</div>
<div class="t" style="left:148.20px;top:322.99px;font-size:11.30px;color:#222;transform:scaleX(0.975)">CH2-Office - RH</div>
<div class="t" style="left:278.00px;top:322.99px;font-size:11.30px;color:#222;transform:scaleX(1.034)">Clearing Alarm</div>
<div class="t" style="left:400.48px;top:322.76px;font-size:10.75px;color:#222;transform:scaleX(1.000)">38,5</div>
<div class="t" style="left:71.46px;top:339.88px;font-size:10.75px;color:#222;transform:scaleX(1.000)">3.3.2015 11:05</div>
<div class="t" style="left:148.20px;top:340.11px;font-size:11.30px;color:#222;transform:scaleX(0.975)">CH2-Office - RH</div>
<div class="t" style="left:278.00px;top:340.11px;font-size:11.30px;color:#222;transform:scaleX(1.026)">High Alarm</div>
<div class="t" style="left:400.48px;top:339.88px;font-size:10.75px;color:#222;transform:scaleX(1.000)">76,3</div>
<div class="t" style="left:71.46px;top:357.00px;font-size:10.75px;color:#222;transform:scaleX(1.000)">3.3.2015 11:05</div>
<div class="t" style="left:148.20px;top:357.23px;font-size:11.30px;color:#222;transform:scaleX(0.975)">CH2-Office - RH</div>
<div class="t" style="left:278.00px;top:357.23px;font-size:11.30px;color:#222;transform:scaleX(1.034)">Clearing Alarm</div>
<div class="t" style="left:400.48px;top:357.00px;font-size:10.75px;color:#222;transform:scaleX(1.000)">35,5</div>
<div class="t" style="left:71.46px;top:374.12px;font-size:10.75px;color:#222;transform:scaleX(1.000)">3.3.2015 11:03</div>
<div class="t" style="left:148.20px;top:374.35px;font-size:11.30px;color:#222;transform:scaleX(0.989)">CH1-Office - T</div>
<div class="t" style="left:278.00px;top:374.35px;font-size:11.30px;color:#222;transform:scaleX(1.026)">High Alarm</div>
<div class="t" style="left:400.48px;top:374.12px;font-size:10.75px;color:#222;transform:scaleX(1.000)">25,6</div>
<div class="t" style="left:71.46px;top:391.24px;font-size:10.75px;color:#222;transform:scaleX(1.000)">3.3.2015 11:02</div>
<div class="t" style="left:148.20px;top:391.47px;font-size:11.30px;color:#222;transform:scaleX(0.975)">CH2-Office - RH</div>
<div class="t" style="left:278.00px;top:391.47px;font-size:11.30px;color:#222;transform:scaleX(1.026)">High Alarm</div>
<div class="t" style="left:400.48px;top:391.24px;font-size:10.75px;color:#222;transform:scaleX(1.000)">52,5</div>
<div class="t" style="left:76.64px;top:408.36px;font-size:10.75px;color:#222;transform:scaleX(1.000)">3.3.2015 9:26</div>
<div class="t" style="left:148.20px;top:408.59px;font-size:11.30px;color:#222;transform:scaleX(1.031)">BIN2-Power supply</div>
<div class="t" style="left:278.00px;top:408.59px;font-size:11.30px;color:#222;transform:scaleX(1.056)">Active Alarm</div>
<div class="t" style="left:371.70px;top:408.59px;font-size:11.30px;color:#222;transform:scaleX(1.006)">FAIL!!</div>
<div class="t" style="left:76.64px;top:425.48px;font-size:10.75px;color:#222;transform:scaleX(1.000)">3.3.2015 9:26</div>
<div class="t" style="left:148.20px;top:425.71px;font-size:11.30px;color:#222;transform:scaleX(1.034)">BIN1-Warehouse door</div>
<div class="t" style="left:278.00px;top:425.71px;font-size:11.30px;color:#222;transform:scaleX(1.056)">Active Alarm</div>
<div class="t" style="left:371.70px;top:425.71px;font-size:11.30px;color:#222;transform:scaleX(1.046)">open</div>
<div class="a" style="left:21px;top:180px;width:125.5px;height:19.5px;box-sizing:border-box;border:2px solid #1f6140;"></div>
<div class="a" style="left:144px;top:196.5px;width:5.5px;height:5.5px;background:#1f6140;box-sizing:border-box;border:1px solid #fff;"></div>
<div class="a" style="left:681px;top:164px;width:18px;height:17px;background:#f3f3f3;"></div>
<div class="a" style="left:681px;top:181px;width:18px;height:304px;background:#e4e4e4;"></div>
<div class="a" style="left:684px;top:167.5px;width:12.5px;height:12px;background:#fff;box-sizing:border-box;border:1px solid #c6c6c6;"></div>
<svg class="a" style="left:686.5px;top:171px;" width="8" height="5" viewBox="0 0 8 5"><path d="M0 4.5l4-4 4 4z" fill="#555"/></svg>
<div class="a" style="left:684px;top:180px;width:12.5px;height:248px;background:#fff;box-sizing:border-box;border:1px solid #d0d0d0;"></div>
<div class="a" style="left:684px;top:473.5px;width:12.5px;height:12px;background:#fff;box-sizing:border-box;border:1px solid #c6c6c6;"></div>
<svg class="a" style="left:686.5px;top:477.5px;" width="8" height="5" viewBox="0 0 8 5"><path d="M0 0.5h8l-4 4z" fill="#555"/></svg>
<div class="a" style="left:1px;top:485px;width:698px;height:24px;background:#f3f3f3;"></div>
<svg class="a" style="left:23px;top:494.5px;" width="5" height="7" viewBox="0 0 5 7"><path d="M4 0.8v5.4L1 3.5z" fill="#b8b8b8"/></svg>
<svg class="a" style="left:48.5px;top:494.5px;" width="5" height="7" viewBox="0 0 5 7"><path d="M1 0.8v5.4L4 3.5z" fill="#b8b8b8"/></svg>
<div class="a" style="left:86px;top:485px;width:92.5px;height:21px;background:#fff;box-sizing:border-box;border:1px solid #d4d4d4;border-top:none;"></div>
<div class="a" style="left:86px;top:504px;width:92.5px;height:2px;background:#217346;"></div>
<div class="t" style="left:97.00px;top:492.44px;font-size:10.47px;color:#217346;font-weight:bold;transform:scaleX(1.016)">event_comma</div>
<svg class="a" style="left:207px;top:491px;" width="14" height="14" viewBox="0 0 14 14"><circle cx="7" cy="7" r="6.2" fill="#fff" stroke="#666" stroke-width="1.2"/><path d="M7 3.5v7M3.5 7h7" stroke="#555" stroke-width="1.5"/></svg>
<div class="a" style="left:419.6px;top:492.6px;width:2px;height:2px;background:#5a5a5a;"></div>
<div class="a" style="left:419.6px;top:496.3px;width:2px;height:2px;background:#5a5a5a;"></div>
<div class="a" style="left:419.6px;top:500px;width:2px;height:2px;background:#5a5a5a;"></div>
<div class="a" style="left:434px;top:491px;width:13px;height:12.5px;background:#fff;box-sizing:border-box;border:1px solid #c6c6c6;"></div>
<svg class="a" style="left:438px;top:494px;" width="5" height="7" viewBox="0 0 5 7"><path d="M4.5 0v7L0.5 3.5z" fill="#555"/></svg>
<div class="a" style="left:447px;top:491px;width:192px;height:12.5px;background:#fff;box-sizing:border-box;border:1px solid #c6c6c6;"></div>
<div class="a" style="left:639px;top:491px;width:29px;height:12.5px;background:#dedede;"></div>
<div class="a" style="left:668px;top:491px;width:12.5px;height:12.5px;background:#fff;box-sizing:border-box;border:1px solid #c6c6c6;"></div>
<svg class="a" style="left:672px;top:494px;" width="5" height="7" viewBox="0 0 5 7"><path d="M0.5 0v7L4.5 3.5z" fill="#555"/></svg>
<div class="a" style="left:0px;top:509.5px;width:700px;height:19.5px;background:#0f6836;"></div>
<div class="t" style="left:7.70px;top:513.89px;font-size:10.17px;color:#e8f3ec;transform:scaleX(0.818)">PŘIPRAVEN</div>
<div class="a" style="left:438.5px;top:509.5px;width:31.5px;height:19.5px;background:#0a4f28;"></div>
<svg class="a" style="left:448px;top:513px;" width="12" height="12" viewBox="0 0 12 12"><rect x="0.5" y="0.5" width="11" height="11" fill="none" stroke="#fff"/><path d="M4.5 0.5v11M7.5 0.5v11M0.5 4.5h11M0.5 7.5h11" stroke="#fff"/></svg>
<svg class="a" style="left:480px;top:513px;" width="13" height="12" viewBox="0 0 13 12"><rect x="0.5" y="0.5" width="12" height="11" fill="none" stroke="#e6f3ea"/><rect x="3.5" y="2.5" width="6" height="6.5" fill="none" stroke="#e6f3ea"/><path d="M4 5.5h5" stroke="#e6f3ea" stroke-width="0.8"/></svg>
<svg class="a" style="left:513px;top:513px;" width="12" height="12" viewBox="0 0 12 12"><rect x="0.5" y="0.5" width="11" height="11" fill="none" stroke="#e6f3ea"/><rect x="1" y="1" width="7.5" height="6" fill="#f0f8f2"/><rect x="4" y="1" width="1.5" height="6" fill="#9bb8a5"/><path d="M1 7.5h10.5M8.5 1v6.5" stroke="#e6f3ea" stroke-width="1"/></svg>
<div class="a" style="left:539.5px;top:518px;width:5px;height:1.5px;background:#fff;"></div>
<div class="a" style="left:548px;top:518px;width:88px;height:1px;background:#fff;"></div>
<div class="a" style="left:589px;top:513.5px;width:3.5px;height:9px;background:#fff;"></div>
<svg class="a" style="left:636px;top:514px;" width="8" height="8" viewBox="0 0 8 8"><path d="M4 0v8M0 4h8" stroke="#fff" stroke-width="1.6"/></svg>
<div class="t" style="left:657.00px;top:513.62px;font-size:10.61px;color:#fff;transform:scaleX(0.844)">100 %</div>
<div class="a" style="left:0px;top:0px;width:700px;height:1px;background:#0f6836;"></div>
<div class="a" style="left:0px;top:0px;width:1px;height:529px;background:#1d5a3c;"></div>
<div class="a" style="left:699px;top:0px;width:1px;height:529px;background:#1d5a3c;"></div>
</body></html>
